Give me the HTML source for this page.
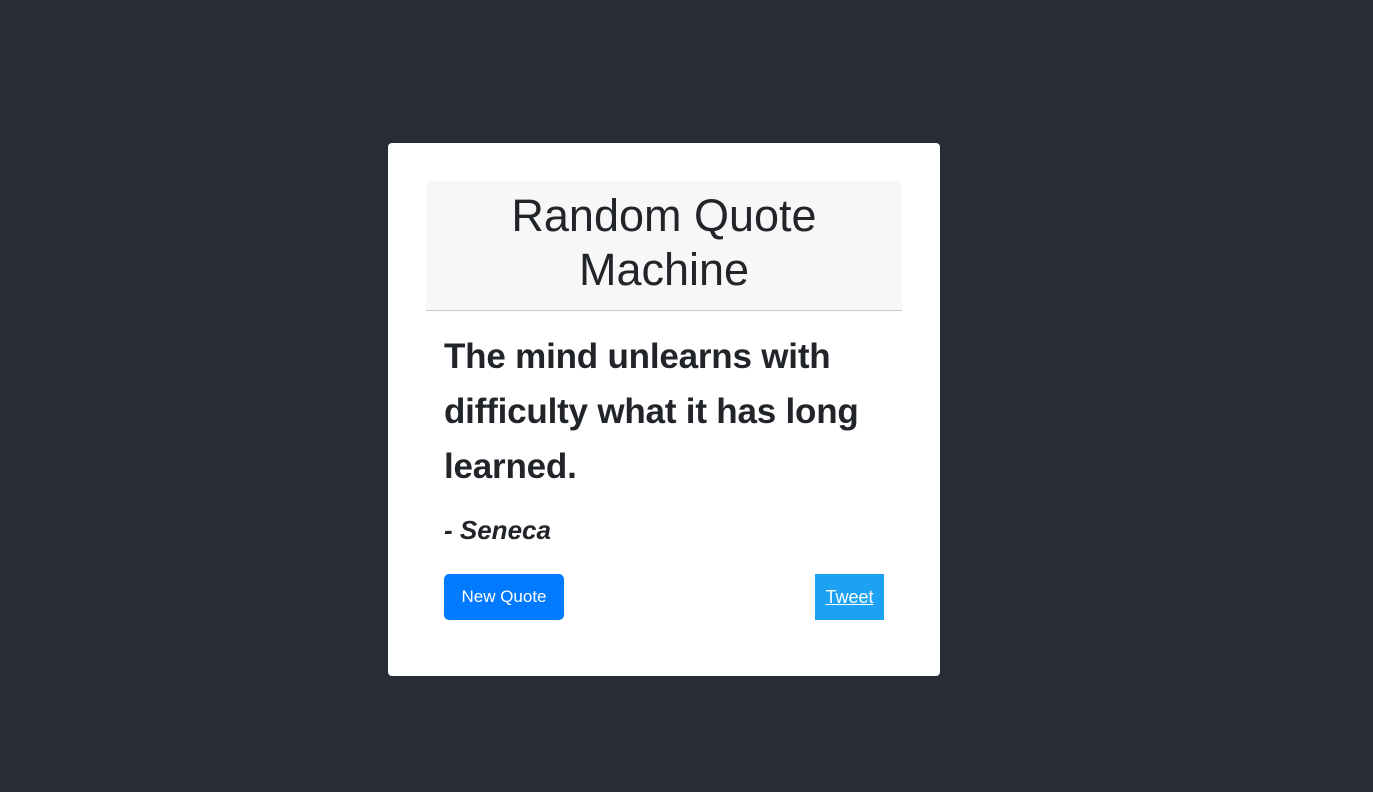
<!DOCTYPE html>
<html><head><style>
body{margin:0;background:#282c34;width:1373px;height:792px;font-family:"Liberation Sans",Arial,sans-serif;color:#212529;position:relative;overflow:hidden}
.card{position:absolute;left:388px;top:143px;width:552px;height:533px;background:#fff;border-radius:4px;box-sizing:border-box}
.hd{position:absolute;left:38px;top:38px;width:476px;height:130px;background:#f7f7f7;border-bottom:1px solid #ccc;border-radius:5px 5px 0 0;text-align:center;font-size:45px;line-height:54px;padding-top:8px;box-sizing:border-box}
.q{position:absolute;left:56px;top:186px;font-size:35px;font-weight:bold;line-height:55px;white-space:nowrap;letter-spacing:-0.2px}
.a{position:absolute;left:56px;top:372px;font-size:26px;font-style:italic;font-weight:bold;white-space:nowrap}
.b1{position:absolute;left:56px;top:431px;width:120px;height:46px;background:#007bff;color:#fff;border-radius:5px;font-size:17px;line-height:46px;text-align:center}
.b2{position:absolute;left:427px;top:431px;width:69px;height:46px;background:#1da1f2;color:#fff;font-size:18px;line-height:46px;text-align:center;text-decoration:underline}
</style></head><body>
<div class="card">
<div class="hd">Random Quote<br>Machine</div>
<div class="q">The mind unlearns with<br>difficulty what it has long<br>learned.</div>
<div class="a">- Seneca</div>
<div class="b1">New Quote</div>
<div class="b2">Tweet</div>
</div>
</body></html>
